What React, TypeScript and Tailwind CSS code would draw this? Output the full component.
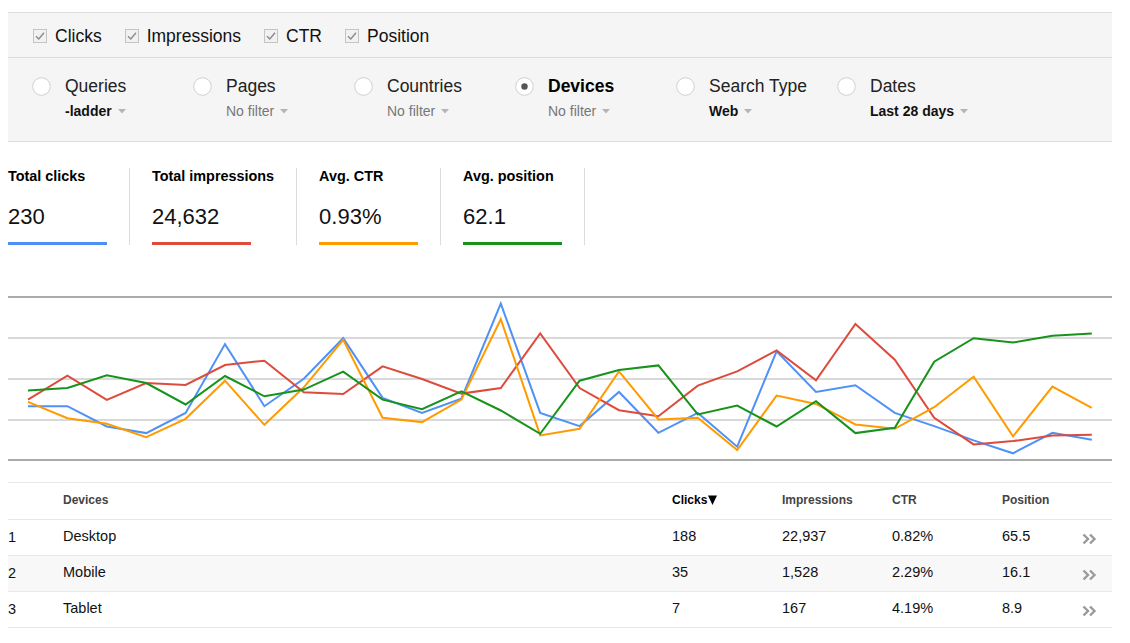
import React from "react";

const FONT = { fontFamily: '"Liberation Sans", Arial, sans-serif' };

function Checkbox() {
  return (
    <svg width="14" height="14" viewBox="0 0 14 14" className="shrink-0">
      <rect x="0.5" y="0.5" width="13" height="13" fill="#f1f1f1" stroke="#c4c4c4" />
      <path d="M3 7.2 L5.8 10 L11 3.8" fill="none" stroke="#8a8a8a" strokeWidth="1.4" />
    </svg>
  );
}

function Radio({ checked }: { checked?: boolean }) {
  return (
    <svg width="19" height="19" viewBox="0 0 19 19" className="shrink-0">
      <circle cx="9.5" cy="9.5" r="8.8" fill="#fff" stroke="#cfcfcf" strokeWidth="1" />
      {checked && <circle cx="9.5" cy="9.5" r="3.2" fill="#555" />}
    </svg>
  );
}

function Caret() {
  return (
    <svg width="8" height="5" viewBox="0 0 8 5" className="ml-[6px] inline-block">
      <path d="M0 0 L8 0 L4 4.5 Z" fill="#b5b5b5" />
    </svg>
  );
}

const filters = [
  { title: "Queries", sub: "-ladder", bold: true },
  { title: "Pages", sub: "No filter", bold: false },
  { title: "Countries", sub: "No filter", bold: false },
  { title: "Devices", sub: "No filter", bold: false, checked: true },
  { title: "Search Type", sub: "Web", bold: true },
  { title: "Dates", sub: "Last 28 days", bold: true },
];

const metrics = [
  { label: "Total clicks", value: "230", color: "bg-[#4d8ff5]", first: true },
  { label: "Total impressions", value: "24,632", color: "bg-[#dc4b3c]" },
  { label: "Avg. CTR", value: "0.93%", color: "bg-[#ff9b00]" },
  { label: "Avg. position", value: "62.1", color: "bg-[#17921b]" },
];

const series: { color: string; ys: number[] }[] = [
  {
    color: "#4f91f6",
    ys: [405.2, 405.2, 425.5, 432.1, 411.9, 343.1, 405.2, 377.7, 337.2, 396.9, 411.9, 397.6, 302.6, 411.9, 425.1, 391.0, 431.8, 411.9, 445.7, 350.4, 391.0, 384.3, 411.9, 425.1, 439.4, 452.3, 431.8, 438.8],
  },
  {
    color: "#dc4b3c",
    ys: [398.6, 374.7, 398.9, 382.0, 384.0, 364.0, 359.7, 391.3, 393.0, 365.4, 378.0, 392.6, 387.0, 332.5, 387.0, 409.2, 415.2, 384.6, 370.4, 349.4, 379.3, 322.9, 358.7, 416.8, 443.4, 440.1, 434.4, 433.8],
  },
  {
    color: "#ff9b00",
    ys: [400.9, 417.2, 422.8, 436.1, 417.8, 379.7, 423.8, 386.3, 338.8, 416.8, 421.1, 398.6, 318.2, 434.4, 427.8, 370.4, 418.5, 416.8, 449.0, 394.6, 402.9, 423.5, 427.8, 406.2, 375.7, 435.4, 385.6, 406.9],
  },
  {
    color: "#17921b",
    ys: [389.6, 387.0, 374.3, 382.0, 403.5, 375.0, 395.3, 388.6, 370.7, 398.6, 408.2, 390.3, 409.5, 432.8, 379.7, 369.0, 364.4, 413.5, 404.6, 425.5, 400.2, 432.1, 426.8, 360.7, 337.2, 341.5, 334.8, 332.5],
  },
];

function Chart() {
  const toPts = (ys: number[]) =>
    ys.map((y, i) => `${(20 + i * 39.4).toFixed(1)},${(y - 280).toFixed(1)}`).join(" ");
  const grid = [16, 57, 98, 139, 179];
  return (
    <svg width="1104" height="190" viewBox="0 0 1104 190" className="block">
      {grid.map((g, i) => (
        <line
          key={g}
          x1="0"
          x2="1104"
          y1={g}
          y2={g}
          stroke={i === 0 || i === grid.length - 1 ? "#8f8f8f" : "#cccccc"}
          strokeWidth={i === 0 || i === grid.length - 1 ? 1.3 : 1.6}
        />
      ))}
      {series.map((s) => (
        <polyline
          key={s.color}
          points={toPts(s.ys)}
          fill="none"
          stroke={s.color}
          strokeWidth="2"
          strokeLinejoin="miter"
        />
      ))}
    </svg>
  );
}

function Chevrons() {
  return (
    <svg width="15" height="12" viewBox="0 0 15 12">
      <path d="M1.5 1.5 L6 6 L1.5 10.5" fill="none" stroke="#9a9a9a" strokeWidth="2.4" />
      <path d="M8 1.5 L12.5 6 L8 10.5" fill="none" stroke="#9a9a9a" strokeWidth="2.4" />
    </svg>
  );
}

const rows = [
  { n: "1", d: "Desktop", c: "188", i: "22,937", ctr: "0.82%", p: "65.5" },
  { n: "2", d: "Mobile", c: "35", i: "1,528", ctr: "2.29%", p: "16.1" },
  { n: "3", d: "Tablet", c: "7", i: "167", ctr: "4.19%", p: "8.9" },
];

export default function App() {
  return (
    <div className="w-[1130px] h-[643px] bg-white overflow-hidden text-[#222]" style={FONT}>
      <div className="pl-[8px] pr-[18px] pt-[12px]">
        {/* Filter box */}
        <div className="bg-[#f5f5f5] border-t border-[#dcdcdc]">
          <div className="h-[45px] flex items-center pl-[25px] pt-[2px] border-b border-[#dcdcdc]">
            {["Clicks", "Impressions", "CTR", "Position"].map((t, i) => (
              <div key={t} className={`flex items-center ${i > 0 ? "ml-[23px]" : ""}`}>
                <Checkbox />
                <span className="ml-[8px] text-[17.5px] leading-[20px] text-[#111]">{t}</span>
              </div>
            ))}
          </div>
          <div className="h-[84px] flex pl-[24px] pt-[18px] border-b border-[#dcdcdc]">
            {filters.map((f) => (
              <div key={f.title} className="w-[161px] flex shrink-0">
                <div className="pt-[1px]">
                  <Radio checked={f.checked} />
                </div>
                <div className="ml-[14px]">
                  <div
                    className={`text-[17.5px] leading-[20px] ${f.checked ? "font-bold text-black" : "text-[#222]"}`}
                  >
                    {f.title}
                  </div>
                  <div
                    className={`mt-[6px] text-[14px] leading-[18px] flex items-center ${f.bold ? "font-bold text-[#111]" : "text-[#777]"}`}
                  >
                    {f.sub}
                    <Caret />
                  </div>
                </div>
              </div>
            ))}
          </div>
        </div>

        {/* Metrics */}
        <div className="flex mt-[26px] h-[77px]">
          {metrics.map((m) => (
            <div
              key={m.label}
              className={`flex flex-col border-r border-[#dcdcdc] pr-[22px] ${m.first ? "" : "pl-[22px]"}`}
            >
              <div className="text-[14.4px] leading-[16px] font-bold text-black whitespace-nowrap">{m.label}</div>
              <div className="mt-[20px] text-[22px] leading-[26px] text-[#111]">{m.value}</div>
              <div className={`mt-[12px] h-[3px] w-[99px] ${m.color}`} />
            </div>
          ))}
        </div>

        {/* Chart */}
        <div className="mt-[36px]">
          <Chart />
        </div>

        {/* Table */}
        <div className="mt-[11px] border-t border-[#e8e8e8]">
          <div className="h-[37px] flex items-center pb-[2px] border-b border-[#e8e8e8] text-[12px] font-bold text-[#444]">
            <div className="w-[55px]" />
            <div className="w-[609px]">Devices</div>
            <div className="w-[110px] flex items-center text-black">
              Clicks
              <svg width="9" height="10" viewBox="0 0 9 10" className="ml-[1px]">
                <path d="M0 0.5 L9 0.5 L4.5 10 Z" fill="#000" />
              </svg>
            </div>
            <div className="w-[110px]">Impressions</div>
            <div className="w-[110px]">CTR</div>
            <div className="w-[80px]">Position</div>
          </div>
          {rows.map((r, idx) => (
            <div
              key={r.n}
              className={`h-[36px] flex items-center pb-[2px] border-b border-[#e8e8e8] text-[14.5px] text-[#111] ${idx === 1 ? "bg-[#f8f8f8]" : ""}`}
            >
              <div className="w-[55px] pt-[3px]">{r.n}</div>
              <div className="w-[609px]">{r.d}</div>
              <div className="w-[110px]">{r.c}</div>
              <div className="w-[110px]">{r.i}</div>
              <div className="w-[110px]">{r.ctr}</div>
              <div className="w-[80px]">{r.p}</div>
              <div className="w-[30px] pt-[5px]">
                <Chevrons />
              </div>
            </div>
          ))}
        </div>
      </div>
    </div>
  );
}
